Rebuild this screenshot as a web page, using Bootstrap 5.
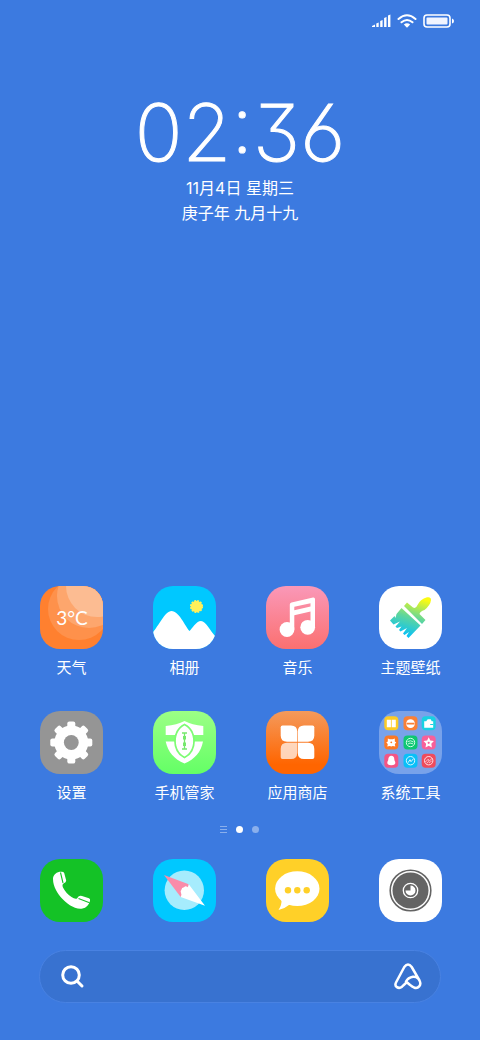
<!DOCTYPE html>
<html lang="zh-CN">
<head>
<meta charset="utf-8">
<meta name="viewport" content="width=device-width, initial-scale=1">
<title>主屏幕</title>
<link rel="stylesheet" href="https://cdn.jsdelivr.net/npm/bootstrap@5.3.0/dist/css/bootstrap.min.css">
<style>
  body { background: #3c7ae0; color: #fff; font-family: Inter, "Noto Sans CJK SC", sans-serif; }
  .status { padding: 14px 26px 0 0; gap: 6px; }
  .clock { margin-top: 64px; font-size: 79px; line-height: 80px; font-weight: 200; font-feature-settings: "ss01", "cv09", "cv03"; -webkit-text-stroke: 1px #fff; }
  .date { margin-top: 4px; font-size: 16px; line-height: 25px; }
  .apps { padding: 0 13px 0 15px; }
  .app-grid { row-gap: 32px; }
  .app { border: 0; background: none; color: inherit; padding: 0; font-size: 15px; line-height: 20px; }
  .app svg { display: block; width: 63px; height: 63px; margin: 0 auto; border-radius: 20px; }
  .app span { display: block; margin-top: 9px; }
  .pager { margin: 19px 0 24px; gap: 9px; height: 12px; padding-right: 3px; }
  .pager i { width: 7px; height: 7px; border-radius: 50%; background: #fff; }
  .pager .off { opacity: .4; }
  .finder { margin: 22px 39px 37px; height: 53px; border: 1px solid #4982e2; border-radius: 27px; background: #3872d0; padding: 0 18px 0 20px; }
  .finder input { background: none; border: 0; color: #fff; outline: 0; min-width: 0; }
  .finder button { background: none; border: 0; padding: 0; line-height: 0; }
</style>
</head>
<body>
<div class="d-flex flex-column min-vh-100">
  <header class="status d-flex justify-content-end align-items-center">
    <svg width="19" height="14" viewBox="0 0 19 14" fill="#fff" aria-label="信号"><path d="M0 13V12L3 10.500V13zM4.300 9.500l2.400-1V13H4.300zM8.200 7l2.400-1V13H8.200zM12.100 4l2.400-1v10h-2.400zM16 1.500l2.400-1V13H16z"/></svg>
    <svg width="20" height="14" viewBox="0 0 20 14" fill="none" stroke="#fff" stroke-width="2" stroke-linecap="round" aria-label="无线网络"><path d="M1.500 5Q10-2.500 18.500 5M4.500 8.300Q10 3.600 15.500 8.300"/><path d="M6.800 10.600Q10 8 13.200 10.600L10 13.800z" fill="#fff" stroke="none"/></svg>
    <svg width="31" height="14" viewBox="0 0 31 14" aria-label="电池"><rect x="1" y="1" width="26" height="12" rx="3" fill="none" stroke="#fff" stroke-width="1.600"/><rect x="3.500" y="3.500" width="21" height="7" rx="1" fill="#f0f4ff"/><path d="M29 4.500q2 .5 2 2.500t-2 2.500z" fill="#fff"/></svg>
  </header>

  <section class="text-center">
    <div class="clock">02:36</div>
    <div class="date">11月4日 星期三<br>庚子年 九月十九</div>
  </section>

  <main class="apps mt-auto">
    <div class="row g-0 app-grid text-center">
      <div class="col-3"><button class="app" type="button">
        <svg viewBox="0 0 63 63"><rect width="63" height="63" fill="#ff802f"/><circle cx="39" cy="23" r="31" fill="#fe914b"/><circle cx="49" cy="10" r="32" fill="#fda66d"/><circle cx="57" cy="0" r="31" fill="#fcbc92"/><text x="32" y="39" text-anchor="middle" font-family="Lato, sans-serif" font-size="19" fill="#fff">3°C</text></svg>
        <span>天气</span></button></div>
      <div class="col-3"><button class="app" type="button">
        <svg viewBox="0 0 63 63"><rect width="63" height="63" fill="#00c8ff"/><circle cx="43.500" cy="20.500" r="5.800" fill="#fff05a"/><circle cx="43.500" cy="20.500" r="5.800" fill="none" stroke="#fff05a" stroke-width="1.600" stroke-dasharray="1.800 1.240"/><path d="M0 46C5 41 12 25 18.500 25C26 25 32 40 36.500 45C39 43 43 35 48 35C53 35 57 45 63 51V63H0z" fill="#fff"/></svg>
        <span>相册</span></button></div>
      <div class="col-3"><button class="app" type="button">
        <svg viewBox="0 0 63 63"><defs><linearGradient id="g-music" x2="0" y2="1"><stop stop-color="#fa98b8"/><stop offset="1" stop-color="#fb7070"/></linearGradient></defs><rect width="63" height="63" fill="url(#g-music)"/><g fill="#fff"><circle cx="21" cy="43.500" r="7.400"/><circle cx="41.700" cy="41.300" r="7.400"/><path fill-rule="evenodd" d="M23.800 18.500Q23.800 16.800 25.500 16.400L47 11.500Q49 11.200 49 13V41.300H44.500V25.500L28.300 29.200V43.500H23.800zM28.300 20.800V24.200L44.500 20.600V17.200z"/></g></svg>
        <span>音乐</span></button></div>
      <div class="col-3"><button class="app" type="button">
        <svg viewBox="0 0 63 63"><defs><linearGradient id="g-brush" gradientUnits="userSpaceOnUse" x1="40" y1="12" x2="28" y2="52"><stop stop-color="#fbfb12"/><stop offset=".5" stop-color="#5fd69c"/><stop offset="1" stop-color="#00bfff"/></linearGradient></defs><rect width="63" height="63" fill="#fff"/><g fill="url(#g-brush)"><path d="M25 20L28 16.500L34 21.500Q37 23 38.500 19Q41 13.500 48 11.300Q52 10.500 52 14Q51.500 19 45.500 24Q41 25.500 40.500 28L46.500 34L43 38z"/><path d="M22.500 22L41.500 39.500L29.500 52L27.500 50L30 46L25.500 49L24 47.500L28 42L21.500 45.500L20 44L22.500 40.500L18 42L16.500 40.500L21 35.500L14.500 38.500L11 34.500L15.500 30L16.500 32L17.500 28z"/></g></svg>
        <span>主题壁纸</span></button></div>

      <div class="col-3"><button class="app" type="button">
        <svg viewBox="0 0 63 63"><defs><g id="teeth"><rect x="27.300" y="10.500" width="8" height="42" rx="2"/></g></defs><rect width="63" height="63" fill="#959595"/><g fill="#fff"><circle cx="31.300" cy="31.500" r="17"/><use href="#teeth"/><use href="#teeth" transform="rotate(45 31.300 31.500)"/><use href="#teeth" transform="rotate(90 31.300 31.500)"/><use href="#teeth" transform="rotate(135 31.300 31.500)"/></g><circle cx="31.300" cy="31.500" r="7.400" fill="#959595"/></svg>
        <span>设置</span></button></div>
      <div class="col-3"><button class="app" type="button">
        <svg viewBox="0 0 63 63"><defs><linearGradient id="g-guard" x2="0" y2="1"><stop stop-color="#9cff85"/><stop offset="1" stop-color="#64ff66"/></linearGradient></defs><rect width="63" height="63" fill="url(#g-guard)"/><path d="M12.700 15Q24 14 31.500 10Q39 14 50.300 15V24H12.700zM12.700 30.500H50C48 41 42 48 31.500 52.500C21 48 15 41 12.700 30.500z" fill="#fff"/><path d="M31.500 14.500C43 20 43 40 31.500 45.500C20 40 20 20 31.500 14.500z" fill="#fff" stroke="#7dfc73" stroke-width="3.600"/><path d="M31.500 14.500C43 20 43 40 31.500 45.500C20 40 20 20 31.500 14.500z" fill="#fff"/><path d="M29 22h5M31.500 22v16M29 38h5" stroke="#76e86d" stroke-width="1.300" fill="none"/><path d="M31.500 25v3.500M31.500 31.500v3.500" stroke="#76e86d" stroke-width="3"/></svg>
        <span>手机管家</span></button></div>
      <div class="col-3"><button class="app" type="button">
        <svg viewBox="0 0 63 63"><defs><linearGradient id="g-store" x2="0" y2="1"><stop stop-color="#f49a5c"/><stop offset=".85" stop-color="#ff6500"/></linearGradient><path id="petal" d="M14.700 16.300Q14.700 14.500 16.500 14.500H25Q31.200 14.500 31.200 20.500V30.700H21Q14.700 30.700 14.700 24.500z" fill="#fff"/></defs><rect width="63" height="63" fill="url(#g-store)"/><use href="#petal"/><use href="#petal" transform="matrix(-1 0 0 1 63 0)"/><use href="#petal" transform="matrix(-1 0 0 -1 63 62.500)"/><use href="#petal" transform="matrix(1 0 0 -1 0 62.500)" opacity=".7"/></svg>
        <span>应用商店</span></button></div>
      <div class="col-3"><button class="app" type="button">
        <svg viewBox="0 0 63 63"><rect width="63" height="63" fill="#78a2ea"/>
          <g transform="translate(5.300 5.300)"><rect width="14" height="14" rx="4" fill="#fccb26"/><path d="M2.500 3.500h4.100v7.500H2.500zM7.400 3.500h4.100v7.500H7.400z" fill="#fff"/></g>
          <g transform="translate(24.500 5.300)"><rect width="14" height="14" rx="4" fill="#f98036"/><circle cx="7" cy="7.300" r="4.400" fill="#fff"/><path d="M3 7.300h8" stroke="#f98036" stroke-width="1.800"/></g>
          <g transform="translate(42.700 5.300)"><rect width="14" height="14" rx="4" fill="#18d1e2"/><path d="M2.500 5h2l1.500-2h3l1 2h1.500v6.500h-9z" fill="#fff"/><path d="M8.500 8.200h3" stroke="#18d1e2"/></g>
          <g transform="translate(5.300 24.500)"><rect width="14" height="14" rx="4" fill="#fb7926"/><path d="M3.500 3l2 .8h3l2-.8v3l1.500 1-1.500 1.500.5 2.500-2.500-.5-1.500.5-1.500-.5-2.500.5.5-2.500L2 7l1.500-1z" fill="#fff"/><circle cx="7" cy="6.800" r=".9" fill="#fb7926"/></g>
          <g transform="translate(24.500 24.500)"><rect width="14" height="14" rx="4" fill="#0ec773"/><circle cx="7" cy="7" r="4.200" fill="none" stroke="#d4ffe6"/><path d="M4 6.200q3-2 6 .3M4.500 8.500l2-1 3 .8" fill="none" stroke="#d4ffe6" stroke-width=".9"/></g>
          <g transform="translate(42.700 24.500)"><rect width="14" height="14" rx="4" fill="#f8609a"/><path d="M7 1.800l1.600 3.200 3.600.6-2.600 2.600.6 3.800L7 10.300 3.800 12l.6-3.800L1.800 5.600 5.400 5z" fill="#fff"/><circle cx="7" cy="7.300" r="1.100" fill="#f8609a"/></g>
          <g transform="translate(5.300 42.700)"><rect width="14" height="14" rx="4" fill="#f45584"/><path d="M7 2c2 0 3 1.500 3 3.500 0 1.500 1 2 1 3.500s-1 2.500-4 2.500S3 10.500 3 9s1-2 1-3.500S5 2 7 2z" fill="#fff"/></g>
          <g transform="translate(24.500 42.700)"><rect width="14" height="14" rx="4" fill="#09c0f8"/><circle cx="7" cy="7" r="4.200" fill="none" stroke="#d5f6ff"/><path d="M4.500 9l2-3 1 2 2.500-3" fill="none" stroke="#d5f6ff"/></g>
          <g transform="translate(42.700 42.700)"><rect width="14" height="14" rx="4" fill="#ef4b5c"/><circle cx="7" cy="7" r="4.200" fill="none" stroke="#ffdce2"/><path d="M3.500 8.500l3-3 1 2 3-3M5 9.500l2-1.500 1 1 2-2" fill="none" stroke="#ffdce2" stroke-width=".8"/></g>
        </svg>
        <span>系统工具</span></button></div>
    </div>

    <div class="pager d-flex justify-content-center align-items-center" aria-hidden="true">
      <svg class="off" width="7" height="7" viewBox="0 0 7 7" stroke="#fff"><path d="M0 .5h7M0 3.500h7M0 6.500h7"/></svg>
      <i></i><i class="off"></i>
    </div>

    <div class="row g-0 text-center">
      <div class="col-3"><button class="app" type="button" aria-label="电话">
        <svg viewBox="0 0 63 63"><rect width="63" height="63" fill="#14c226"/><path d="M13 20C13 15.500 17 12.800 21 12.800Q23.500 12.500 24.200 14L26.200 21.500Q26.200 23.500 23.500 24.500Q21.800 25.500 23 28.500Q26 34.500 31.500 38Q35 40.500 37 39.500L38.500 37.500Q40 36.300 42 37L49 39.300Q50.500 40 50 42Q48 48.500 42.500 49.500C35 51 26 44 22 39.500S13 28 13 20z" fill="#fff"/><path d="M20.500 13.500L23 24M38.500 39.500L49.500 43.800" stroke="#14c226" stroke-width="1.100"/></svg></button></div>
      <div class="col-3"><button class="app" type="button" aria-label="浏览器">
        <svg viewBox="0 0 63 63"><rect width="63" height="63" fill="#00c8ff"/><circle cx="31.300" cy="31.300" r="19.700" fill="#a6ecfd"/><path d="M11 16L35.700 25.300L34.500 31L27.700 38z" fill="#fa8caa"/><path d="M35.700 25.300L52 46.700L27.700 38Q29 35.500 28 34Q27 32 28.500 30.500Q28.500 28.500 31 28.300Q33 26.500 34.300 28.200Q36 27.500 35.700 25.300z" fill="#fff"/></svg></button></div>
      <div class="col-3"><button class="app" type="button" aria-label="短信">
        <svg viewBox="0 0 63 63"><rect width="63" height="63" fill="#ffd028"/><ellipse cx="31.300" cy="29.700" rx="22.200" ry="17.400" fill="#fff"/><path d="M15.500 40Q16 46 12.500 51Q19 49.500 24.500 45z" fill="#fff"/><g fill="#ffd028"><circle cx="22" cy="31.300" r="3.200"/><circle cx="31.300" cy="31.300" r="3.200"/><circle cx="40.700" cy="31.300" r="3.200"/></g></svg></button></div>
      <div class="col-3"><button class="app" type="button" aria-label="相机">
        <svg viewBox="0 0 63 63"><rect width="63" height="63" fill="#fff"/><circle cx="31.500" cy="31.500" r="20.300" fill="none" stroke="#646464" stroke-width="1.600"/><circle cx="31.500" cy="31.500" r="18" fill="#646464"/><circle cx="31.500" cy="31.500" r="7.200" fill="none" stroke="#fff" stroke-width="1.300"/><path d="M31.500 26.500a5 5 0 1 1-5 5h5z" fill="#fff"/></svg></button></div>
    </div>
  </main>

  <form class="finder d-flex align-items-center" role="search">
    <label for="q" class="lh-1"><svg width="26" height="26" viewBox="0 0 26 26" fill="none" stroke="#fff" stroke-width="3" stroke-linecap="round" aria-label="搜索"><circle cx="11" cy="11" r="8.300"/><path d="M17.500 17.500L22 22"/></svg></label>
    <input id="q" type="text" class="flex-grow-1 px-2">
    <button type="button" aria-label="助手"><svg width="28" height="27" viewBox="0 0 28 27" fill="none" stroke="#fff" stroke-width="2.500" stroke-linecap="round" stroke-linejoin="round"><path d="M12.500 19.500L8 23.700C4.500 26.500 0 23.500 2 19.500L10.300 4Q14 -1 17.700 4L25.500 17.500C28 22.500 24 26 20 24.500Q17 23 12 18.500Q14 14.500 19 13.700Q22.500 13.500 24 15.500"/></svg></button>
  </form>
</div>
<script src="https://cdn.jsdelivr.net/npm/bootstrap@5.3.0/dist/js/bootstrap.bundle.min.js"></script>
</body>
</html>
